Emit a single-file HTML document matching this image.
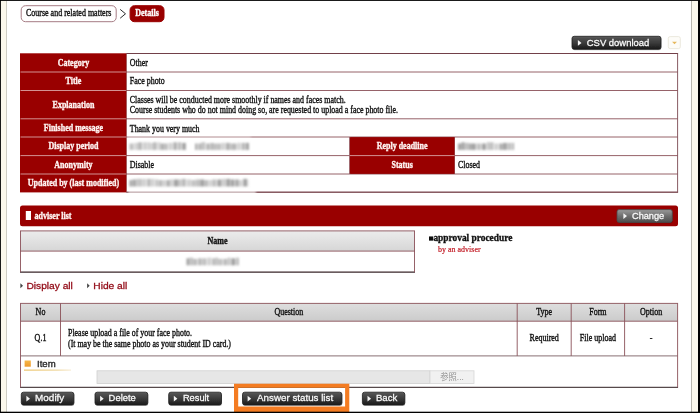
<!DOCTYPE html>
<html lang="en">
<head>
<meta charset="utf-8">
<title>Details</title>
<style>
html,body{margin:0;padding:0;background:#fff;}
body{width:700px;height:413px;overflow:hidden;}
svg{display:block;}
text{white-space:pre;}
</style>
</head>
<body>
<svg width="700" height="413" viewBox="0 0 700 413">
<defs>
<linearGradient id="gd" x1="0" y1="0" x2="0" y2="1"><stop offset="0" stop-color="#646464"/><stop offset="0.12" stop-color="#505050"/><stop offset="0.55" stop-color="#383838"/><stop offset="1" stop-color="#1a1a1a"/></linearGradient>
<linearGradient id="gg" x1="0" y1="0" x2="0" y2="1"><stop offset="0" stop-color="#9a9a9a"/><stop offset="0.5" stop-color="#6e6e6e"/><stop offset="1" stop-color="#4e4e4e"/></linearGradient>
<linearGradient id="gh" x1="0" y1="0" x2="0" y2="1"><stop offset="0" stop-color="#dedede"/><stop offset="1" stop-color="#cbcbcb"/></linearGradient>
<linearGradient id="gh2" x1="0" y1="0" x2="0" y2="1"><stop offset="0" stop-color="#ececec"/><stop offset="1" stop-color="#d6d6d6"/></linearGradient>
<linearGradient id="go" x1="0" y1="0" x2="0" y2="1"><stop offset="0" stop-color="#f7b84a"/><stop offset="1" stop-color="#ee9a2c"/></linearGradient>
<linearGradient id="gu" x1="0" y1="0" x2="1" y2="0"><stop offset="0" stop-color="#e9b84c"/><stop offset="0.7" stop-color="#ecd08c"/><stop offset="1" stop-color="#f6ead0"/></linearGradient>
<filter id="soft" filterUnits="userSpaceOnUse" x="-10" y="-10" width="720" height="433"><feGaussianBlur stdDeviation="0.4"/></filter>
<filter id="bl" x="-10%" y="-100%" width="120%" height="300%"><feGaussianBlur stdDeviation="1.25"/></filter>
</defs>
<g filter="url(#soft)">
<rect x="-10" y="-10" width="720" height="433" fill="#ffffff" />
<rect x="0.5" y="0.5" width="6" height="412" fill="#fbf8ec" />
<line x1="6.5" y1="1" x2="6.5" y2="412" stroke="#cfcdc3" stroke-width="1" />
<rect x="691.5" y="1" width="6.5" height="411" fill="#fbf8ec" />
<line x1="691.5" y1="1" x2="691.5" y2="412" stroke="#b9b7ae" stroke-width="1" />
<rect x="21.2" y="5.7" width="95" height="16" rx="4.3" ry="4.3" fill="#fff" stroke="#a67c84" stroke-width="1"/>
<text transform="translate(68.7 16.1) scale(1 1.2)" font-family="'Liberation Serif','Noto Serif CJK SC',serif" font-size="8" font-weight="normal" fill="#111" text-anchor="middle"  stroke="#111" stroke-width="0.3">Course and related matters</text>
<polyline points="120.2,9.4 125.5,13.8 120.2,18.2" fill="none" stroke="#2a2a2a" stroke-width="1"/>
<rect x="130.1" y="5.7" width="33.9" height="16" rx="4.3" ry="4.3" fill="#990000" stroke="#990000" stroke-width="1"/>
<text transform="translate(147 16.1) scale(1 1.2)" font-family="'Liberation Serif','Noto Serif CJK SC',serif" font-size="8" font-weight="bold" fill="#fff" text-anchor="middle"  stroke="#fff" stroke-width="0.3">Details</text>
<rect x="572.4" y="37.199999999999996" width="89" height="13" rx="2.2" fill="#000" opacity="0.25"/>
<rect x="572" y="36.3" width="89" height="13" rx="2.2" fill="url(#gd)" stroke="#1c1c1c" stroke-width="0.8"/>
<polygon points="577.9,40.0 581.5,42.9 577.9,45.8" fill="#f4f4f4"/>
<text transform="translate(586.8000000000001 45.5) scale(1 1.0)" font-family="'Liberation Sans','Noto Sans CJK JP',sans-serif" font-size="9.35" font-weight="normal" fill="#fafafa" text-anchor="start" textLength="62.5" lengthAdjust="spacingAndGlyphs" stroke="#fafafa" stroke-width="0.27">CSV download</text>
<rect x="668.3" y="36.6" width="12" height="12" rx="1.8" fill="#fdfcf8" stroke="#e9e6da" stroke-width="0.9"/>
<polygon points="672.1,41.7 676.9,41.7 674.5,44.3" fill="#e6b85c"/>
<rect x="20.0" y="53.3" width="106.4" height="139.1" fill="#990000" />
<rect x="349.7" y="137" width="104.80000000000001" height="37" fill="#990000" />
<line x1="20.5" y1="72" x2="126.4" y2="72" stroke="#d9a3a3" stroke-width="0.9" />
<line x1="20.5" y1="90.5" x2="126.4" y2="90.5" stroke="#d9a3a3" stroke-width="0.9" />
<line x1="20.5" y1="118.8" x2="126.4" y2="118.8" stroke="#d9a3a3" stroke-width="0.9" />
<line x1="20.5" y1="137" x2="126.4" y2="137" stroke="#d9a3a3" stroke-width="0.9" />
<line x1="20.5" y1="155.6" x2="126.4" y2="155.6" stroke="#d9a3a3" stroke-width="0.9" />
<line x1="20.5" y1="174" x2="126.4" y2="174" stroke="#d9a3a3" stroke-width="0.9" />
<line x1="349.7" y1="155.6" x2="454.5" y2="155.6" stroke="#d9a3a3" stroke-width="0.9" />
<line x1="126.4" y1="53.5" x2="677.6" y2="53.5" stroke="#8a5058" stroke-width="0.9" />
<line x1="126.4" y1="72" x2="677.6" y2="72" stroke="#8a5058" stroke-width="0.9" />
<line x1="126.4" y1="90.5" x2="677.6" y2="90.5" stroke="#8a5058" stroke-width="0.9" />
<line x1="126.4" y1="118.8" x2="677.6" y2="118.8" stroke="#8a5058" stroke-width="0.9" />
<line x1="126.4" y1="137" x2="677.6" y2="137" stroke="#8a5058" stroke-width="0.9" />
<line x1="126.4" y1="155.6" x2="677.6" y2="155.6" stroke="#8a5058" stroke-width="0.9" />
<line x1="126.4" y1="174" x2="677.6" y2="174" stroke="#8a5058" stroke-width="0.9" />
<line x1="126.4" y1="192.2" x2="677.6" y2="192.2" stroke="#8a5058" stroke-width="0.9" />
<line x1="126.4" y1="53.5" x2="678.0500000000001" y2="53.5" stroke="#6e3c44" stroke-width="0.9" />
<line x1="126.4" y1="192.2" x2="678.0500000000001" y2="192.2" stroke="#6e3c44" stroke-width="0.9" />
<line x1="677.6" y1="53.1" x2="677.6" y2="192.6" stroke="#7a4850" stroke-width="0.9" />
<line x1="126.4" y1="53.5" x2="126.4" y2="192.2" stroke="#7a2a30" stroke-width="0.6" />
<line x1="349.7" y1="137" x2="349.7" y2="174" stroke="#8a5058" stroke-width="0.9" />
<line x1="454.5" y1="137" x2="454.5" y2="174" stroke="#7a2a30" stroke-width="0.6" />
<rect x="350.09999999999997" y="137.4" width="104.20000000000002" height="36.2" fill="#990000" />
<line x1="349.7" y1="155.6" x2="454.5" y2="155.6" stroke="#d9a3a3" stroke-width="0.9" />
<text transform="translate(73.45 65.75) scale(1 1.2)" font-family="'Liberation Serif','Noto Serif CJK SC',serif" font-size="8" font-weight="bold" fill="#fff4f2" text-anchor="middle"  stroke="#fff4f2" stroke-width="0.3">Category</text>
<text transform="translate(73.45 84.25) scale(1 1.2)" font-family="'Liberation Serif','Noto Serif CJK SC',serif" font-size="8" font-weight="bold" fill="#fff4f2" text-anchor="middle"  stroke="#fff4f2" stroke-width="0.3">Title</text>
<text transform="translate(73.45 107.65) scale(1 1.2)" font-family="'Liberation Serif','Noto Serif CJK SC',serif" font-size="8" font-weight="bold" fill="#fff4f2" text-anchor="middle"  stroke="#fff4f2" stroke-width="0.3">Explanation</text>
<text transform="translate(73.45 130.9) scale(1 1.2)" font-family="'Liberation Serif','Noto Serif CJK SC',serif" font-size="8" font-weight="bold" fill="#fff4f2" text-anchor="middle"  stroke="#fff4f2" stroke-width="0.3">Finished message</text>
<text transform="translate(73.45 149.3) scale(1 1.2)" font-family="'Liberation Serif','Noto Serif CJK SC',serif" font-size="8" font-weight="bold" fill="#fff4f2" text-anchor="middle"  stroke="#fff4f2" stroke-width="0.3">Display period</text>
<text transform="translate(73.45 167.8) scale(1 1.2)" font-family="'Liberation Serif','Noto Serif CJK SC',serif" font-size="8" font-weight="bold" fill="#fff4f2" text-anchor="middle"  stroke="#fff4f2" stroke-width="0.3">Anonymity</text>
<text transform="translate(73.45 186.1) scale(1 1.2)" font-family="'Liberation Serif','Noto Serif CJK SC',serif" font-size="8" font-weight="bold" fill="#fff4f2" text-anchor="middle"  stroke="#fff4f2" stroke-width="0.3">Updated by (last modified)</text>
<text transform="translate(402.1 149.3) scale(1 1.2)" font-family="'Liberation Serif','Noto Serif CJK SC',serif" font-size="8" font-weight="bold" fill="#fff4f2" text-anchor="middle"  stroke="#fff4f2" stroke-width="0.3">Reply deadline</text>
<text transform="translate(402.1 167.8) scale(1 1.2)" font-family="'Liberation Serif','Noto Serif CJK SC',serif" font-size="8" font-weight="bold" fill="#fff4f2" text-anchor="middle"  stroke="#fff4f2" stroke-width="0.3">Status</text>
<text transform="translate(129.8 66.35) scale(1 1.2)" font-family="'Liberation Serif','Noto Serif CJK SC',serif" font-size="7.93" font-weight="normal" fill="#111" text-anchor="start"  stroke="#111" stroke-width="0.3">Other</text>
<text transform="translate(129.8 84.45) scale(1 1.2)" font-family="'Liberation Serif','Noto Serif CJK SC',serif" font-size="7.93" font-weight="normal" fill="#111" text-anchor="start"  stroke="#111" stroke-width="0.3">Face photo</text>
<text transform="translate(129.8 102.6) scale(1 1.2)" font-family="'Liberation Serif','Noto Serif CJK SC',serif" font-size="7.93" font-weight="normal" fill="#111" text-anchor="start"  stroke="#111" stroke-width="0.3">Classes will be conducted more smoothly if names and faces match.</text>
<text transform="translate(129.8 112.5) scale(1 1.2)" font-family="'Liberation Serif','Noto Serif CJK SC',serif" font-size="7.93" font-weight="normal" fill="#111" text-anchor="start"  stroke="#111" stroke-width="0.3">Course students who do not mind doing so, are requested to upload a face photo file.</text>
<text transform="translate(129.8 131.8) scale(1 1.2)" font-family="'Liberation Serif','Noto Serif CJK SC',serif" font-size="7.93" font-weight="normal" fill="#111" text-anchor="start"  stroke="#111" stroke-width="0.3">Thank you very much</text>
<text transform="translate(129.8 168.0) scale(1 1.2)" font-family="'Liberation Serif','Noto Serif CJK SC',serif" font-size="7.93" font-weight="normal" fill="#111" text-anchor="start"  stroke="#111" stroke-width="0.3">Disable</text>
<text transform="translate(458 168.0) scale(1 1.2)" font-family="'Liberation Serif','Noto Serif CJK SC',serif" font-size="7.93" font-weight="normal" fill="#111" text-anchor="start"  stroke="#111" stroke-width="0.3">Closed</text>
<rect x="128" y="190.7" width="128" height="3" fill="#ffffff" opacity="0.75" filter="url(#bl)"/>
<rect x="127" y="136" width="124" height="2" fill="#ffffff" opacity="0.45" filter="url(#bl)"/>
<g filter="url(#bl)"><rect x="129.5" y="143.5" width="4.2" height="6.4" fill="#8c8c8c" opacity="0.55"/><rect x="134.6" y="142.9" width="3.2" height="7.0" fill="#8c8c8c" opacity="0.42"/><rect x="138.0" y="142.3" width="4.2" height="7.6" fill="#8c8c8c" opacity="0.6"/><rect x="143.1" y="142.3" width="3.8" height="7.6" fill="#8c8c8c" opacity="0.42"/><rect x="147.4" y="142.3" width="2.6" height="7.6" fill="#8c8c8c" opacity="0.42"/><rect x="150.2" y="142.9" width="2.6" height="7.0" fill="#8c8c8c" opacity="0.42"/><rect x="153.0" y="142.3" width="3.8" height="7.6" fill="#8c8c8c" opacity="0.6"/><rect x="157.7" y="142.3" width="2.6" height="7.6" fill="#8c8c8c" opacity="0.42"/><rect x="160.5" y="143.5" width="3.8" height="6.4" fill="#8c8c8c" opacity="0.68"/><rect x="164.5" y="143.5" width="3.2" height="6.4" fill="#8c8c8c" opacity="0.6"/><rect x="168.6" y="142.9" width="3.8" height="7.0" fill="#8c8c8c" opacity="0.42"/><rect x="173.3" y="142.3" width="3.8" height="7.6" fill="#8c8c8c" opacity="0.68"/><rect x="178.0" y="142.3" width="3.2" height="7.6" fill="#8c8c8c" opacity="0.6"/><rect x="182.1" y="142.9" width="3.8" height="7.0" fill="#8c8c8c" opacity="0.8"/></g>
<g filter="url(#bl)"><rect x="195.0" y="143.5" width="2.6" height="6.4" fill="#8c8c8c" opacity="0.68"/><rect x="198.5" y="143.5" width="2.6" height="6.4" fill="#8c8c8c" opacity="0.68"/><rect x="201.3" y="142.3" width="3.8" height="7.6" fill="#8c8c8c" opacity="0.55"/><rect x="206.0" y="143.5" width="4.2" height="6.4" fill="#8c8c8c" opacity="0.6"/><rect x="210.7" y="142.9" width="2.6" height="7.0" fill="#8c8c8c" opacity="0.68"/><rect x="213.5" y="143.5" width="3.2" height="6.4" fill="#8c8c8c" opacity="0.6"/><rect x="216.9" y="143.5" width="4.2" height="6.4" fill="#8c8c8c" opacity="0.55"/><rect x="221.6" y="142.9" width="3.2" height="7.0" fill="#8c8c8c" opacity="0.42"/><rect x="225.7" y="142.9" width="4.2" height="7.0" fill="#8c8c8c" opacity="0.68"/><rect x="230.4" y="143.5" width="2.6" height="6.4" fill="#8c8c8c" opacity="0.6"/><rect x="233.2" y="143.5" width="3.2" height="6.4" fill="#8c8c8c" opacity="0.68"/><rect x="237.3" y="142.9" width="3.2" height="7.0" fill="#8c8c8c" opacity="0.42"/><rect x="241.4" y="142.9" width="4.2" height="7.0" fill="#8c8c8c" opacity="0.6"/><rect x="246.1" y="142.9" width="2.9" height="7.0" fill="#8c8c8c" opacity="0.8"/></g>
<g filter="url(#bl)"><rect x="458.0" y="143.5" width="3.2" height="6.4" fill="#8c8c8c" opacity="0.8"/><rect x="461.4" y="142.3" width="3.2" height="7.6" fill="#8c8c8c" opacity="0.8"/><rect x="464.8" y="142.9" width="4.2" height="7.0" fill="#8c8c8c" opacity="0.55"/><rect x="469.2" y="143.5" width="2.6" height="6.4" fill="#8c8c8c" opacity="0.8"/><rect x="472.0" y="143.5" width="3.8" height="6.4" fill="#8c8c8c" opacity="0.8"/><rect x="476.7" y="143.5" width="4.2" height="6.4" fill="#8c8c8c" opacity="0.55"/><rect x="481.8" y="143.5" width="4.2" height="6.4" fill="#8c8c8c" opacity="0.8"/><rect x="486.9" y="142.3" width="2.6" height="7.6" fill="#8c8c8c" opacity="0.55"/><rect x="489.7" y="142.3" width="3.8" height="7.6" fill="#8c8c8c" opacity="0.55"/><rect x="494.4" y="143.5" width="3.8" height="6.4" fill="#8c8c8c" opacity="0.42"/><rect x="499.1" y="143.5" width="3.8" height="6.4" fill="#8c8c8c" opacity="0.68"/><rect x="503.1" y="142.9" width="3.8" height="7.0" fill="#8c8c8c" opacity="0.8"/><rect x="507.4" y="142.9" width="4.2" height="7.0" fill="#8c8c8c" opacity="0.55"/><rect x="512.5" y="142.9" width="1.5" height="7.0" fill="#8c8c8c" opacity="0.8"/></g>
<g filter="url(#bl)"><rect x="129.5" y="180.1" width="2.6" height="6.4" fill="#8c8c8c" opacity="0.8"/><rect x="132.6" y="179.5" width="3.2" height="7.0" fill="#8c8c8c" opacity="0.8"/><rect x="136.3" y="178.9" width="3.2" height="7.6" fill="#8c8c8c" opacity="0.55"/><rect x="139.7" y="178.9" width="2.6" height="7.6" fill="#8c8c8c" opacity="0.55"/><rect x="142.8" y="178.9" width="3.2" height="7.6" fill="#8c8c8c" opacity="0.42"/><rect x="146.9" y="178.9" width="3.8" height="7.6" fill="#8c8c8c" opacity="0.6"/><rect x="151.2" y="178.9" width="3.2" height="7.6" fill="#8c8c8c" opacity="0.42"/><rect x="155.3" y="179.5" width="2.6" height="7.0" fill="#8c8c8c" opacity="0.55"/><rect x="158.4" y="180.1" width="4.2" height="6.4" fill="#8c8c8c" opacity="0.6"/><rect x="163.1" y="180.1" width="3.2" height="6.4" fill="#8c8c8c" opacity="0.42"/><rect x="166.8" y="180.1" width="2.6" height="6.4" fill="#8c8c8c" opacity="0.8"/><rect x="169.6" y="179.5" width="3.8" height="7.0" fill="#8c8c8c" opacity="0.42"/><rect x="173.9" y="179.5" width="4.2" height="7.0" fill="#8c8c8c" opacity="0.8"/><rect x="178.3" y="179.5" width="3.2" height="7.0" fill="#8c8c8c" opacity="0.55"/><rect x="182.0" y="178.9" width="3.8" height="7.6" fill="#8c8c8c" opacity="0.6"/><rect x="186.7" y="179.5" width="4.2" height="7.0" fill="#8c8c8c" opacity="0.42"/><rect x="191.4" y="180.1" width="4.2" height="6.4" fill="#8c8c8c" opacity="0.55"/><rect x="195.8" y="179.5" width="4.2" height="7.0" fill="#8c8c8c" opacity="0.55"/><rect x="200.2" y="179.5" width="3.8" height="7.0" fill="#8c8c8c" opacity="0.8"/><rect x="204.2" y="180.1" width="3.8" height="6.4" fill="#8c8c8c" opacity="0.6"/><rect x="208.5" y="180.1" width="3.2" height="6.4" fill="#8c8c8c" opacity="0.42"/><rect x="212.2" y="179.5" width="4.2" height="7.0" fill="#8c8c8c" opacity="0.55"/><rect x="217.3" y="179.5" width="4.2" height="7.0" fill="#8c8c8c" opacity="0.8"/><rect x="222.0" y="178.9" width="4.2" height="7.6" fill="#8c8c8c" opacity="0.42"/><rect x="226.4" y="178.9" width="3.8" height="7.6" fill="#8c8c8c" opacity="0.8"/><rect x="230.7" y="179.5" width="3.8" height="7.0" fill="#8c8c8c" opacity="0.8"/><rect x="235.4" y="179.5" width="3.2" height="7.0" fill="#8c8c8c" opacity="0.8"/><rect x="239.1" y="180.1" width="3.2" height="6.4" fill="#8c8c8c" opacity="0.42"/><rect x="243.2" y="178.9" width="3.8" height="7.6" fill="#8c8c8c" opacity="0.8"/><rect x="247.5" y="179.5" width="1.0" height="7.0" fill="#8c8c8c" opacity="0.42"/></g>
<rect x="20" y="205.4" width="658" height="20.9" rx="2.5" fill="#990000"/>
<rect x="25.8" y="211" width="5.2" height="9" fill="#ffffff" />
<text transform="translate(34.6 218.6) scale(1 1.2)" font-family="'Liberation Serif','Noto Serif CJK SC',serif" font-size="8" font-weight="bold" fill="#fff4f2" text-anchor="start"  stroke="#fff4f2" stroke-width="0.3">adviser list</text>
<rect x="617.4" y="210.5" width="55.3" height="12.8" rx="2.2" fill="#000" opacity="0.25"/>
<rect x="617" y="209.6" width="55.3" height="12.8" rx="2.2" fill="url(#gg)" stroke="#4a4a4a" stroke-width="0.8"/>
<polygon points="623.4,213.2 627.0,216.1 623.4,219.0" fill="#f4f4f4"/>
<text transform="translate(632.0 219.2) scale(1 1.0)" font-family="'Liberation Sans','Noto Sans CJK JP',sans-serif" font-size="9.1" font-weight="normal" fill="#fafafa" text-anchor="start" textLength="32.2" lengthAdjust="spacingAndGlyphs" stroke="#fafafa" stroke-width="0.27">Change</text>
<rect x="20.5" y="230.9" width="394.0" height="20.19999999999999" fill="url(#gh2)" />
<line x1="20.05" y1="230.9" x2="414.95" y2="230.9" stroke="#8a5058" stroke-width="0.9" />
<line x1="20.05" y1="251.1" x2="414.95" y2="251.1" stroke="#8a5058" stroke-width="0.9" />
<line x1="20.05" y1="272.1" x2="414.95" y2="272.1" stroke="#3a2428" stroke-width="1.05" />
<line x1="20.5" y1="230.9" x2="20.5" y2="272.1" stroke="#8a5058" stroke-width="0.9" />
<line x1="414.5" y1="230.9" x2="414.5" y2="272.1" stroke="#8a5058" stroke-width="0.9" />
<text transform="translate(217.5 243.5) scale(1 1.2)" font-family="'Liberation Serif','Noto Serif CJK SC',serif" font-size="8" font-weight="bold" fill="#111" text-anchor="middle"  stroke="#111" stroke-width="0.3">Name</text>
<g filter="url(#bl)"><rect x="186.5" y="258.3" width="2.6" height="7.0" fill="#8c8c8c" opacity="0.8"/><rect x="189.3" y="257.7" width="3.8" height="7.6" fill="#8c8c8c" opacity="0.55"/><rect x="193.3" y="258.9" width="3.8" height="6.4" fill="#8c8c8c" opacity="0.6"/><rect x="198.0" y="258.3" width="3.8" height="7.0" fill="#8c8c8c" opacity="0.6"/><rect x="202.3" y="258.3" width="4.2" height="7.0" fill="#8c8c8c" opacity="0.55"/><rect x="207.4" y="257.7" width="3.8" height="7.6" fill="#8c8c8c" opacity="0.42"/><rect x="212.1" y="258.3" width="3.2" height="7.0" fill="#8c8c8c" opacity="0.6"/><rect x="215.5" y="257.7" width="2.6" height="7.6" fill="#8c8c8c" opacity="0.55"/><rect x="218.3" y="258.9" width="4.2" height="6.4" fill="#8c8c8c" opacity="0.55"/><rect x="223.4" y="258.9" width="3.8" height="6.4" fill="#8c8c8c" opacity="0.6"/><rect x="227.7" y="257.7" width="2.6" height="7.6" fill="#8c8c8c" opacity="0.55"/><rect x="231.2" y="258.3" width="4.2" height="7.0" fill="#8c8c8c" opacity="0.8"/><rect x="236.3" y="257.7" width="2.6" height="7.6" fill="#8c8c8c" opacity="0.6"/></g>
<text transform="translate(428.5 240.0) scale(1 1.0)" font-family="'DejaVu Sans','Noto Sans CJK JP',sans-serif" font-size="5.6" font-weight="normal" fill="#111" text-anchor="start" >■</text>
<text transform="translate(433.4 240.8) scale(1 1.08)" font-family="'Liberation Serif','Noto Serif CJK SC',serif" font-size="9.4" font-weight="bold" fill="#111" text-anchor="start"  stroke="#111" stroke-width="0.3">approval procedure</text>
<text transform="translate(438 251.8) scale(1 1.12)" font-family="'Liberation Serif','Noto Serif CJK SC',serif" font-size="8" font-weight="normal" fill="#c4202a" text-anchor="start"  stroke="#c4202a" stroke-width="0.2">by an adviser</text>
<polygon points="20.4,283.2 23,285.7 20.4,288.2" fill="#444"/>
<text transform="translate(26.4 288.8) scale(1 0.92)" font-family="'Liberation Sans','Noto Sans CJK JP',sans-serif" font-size="10.2" font-weight="normal" fill="#920a16" text-anchor="start"  stroke="#920a16" stroke-width="0.3">Display all</text>
<polygon points="87.1,283.2 89.7,285.7 87.1,288.2" fill="#444"/>
<text transform="translate(93.3 288.8) scale(1 0.92)" font-family="'Liberation Sans','Noto Sans CJK JP',sans-serif" font-size="10.2" font-weight="normal" fill="#920a16" text-anchor="start"  stroke="#920a16" stroke-width="0.3">Hide all</text>
<rect x="20.5" y="303.4" width="657.1" height="17.80000000000001" fill="url(#gh)" />
<line x1="20.05" y1="303.4" x2="678.0500000000001" y2="303.4" stroke="#8a5058" stroke-width="0.9" />
<line x1="20.5" y1="321.2" x2="677.6" y2="321.2" stroke="#8a5058" stroke-width="0.9" />
<line x1="20.5" y1="355.9" x2="677.6" y2="355.9" stroke="#7a6064" stroke-width="0.9" />
<line x1="20.05" y1="387.3" x2="678.0500000000001" y2="387.3" stroke="#2e1c1e" stroke-width="1" />
<line x1="20.5" y1="303.4" x2="20.5" y2="387.3" stroke="#8a5058" stroke-width="0.9" />
<line x1="677.6" y1="303.4" x2="677.6" y2="387.3" stroke="#8a5058" stroke-width="0.9" />
<line x1="60.5" y1="303.4" x2="60.5" y2="355.9" stroke="#8a5058" stroke-width="0.9" />
<line x1="517.2" y1="303.4" x2="517.2" y2="355.9" stroke="#8a5058" stroke-width="0.9" />
<line x1="571.2" y1="303.4" x2="571.2" y2="355.9" stroke="#8a5058" stroke-width="0.9" />
<line x1="624.6" y1="303.4" x2="624.6" y2="355.9" stroke="#8a5058" stroke-width="0.9" />
<text transform="translate(40.5 314.69999999999993) scale(1 1.2)" font-family="'Liberation Serif','Noto Serif CJK SC',serif" font-size="8" font-weight="normal" fill="#111" text-anchor="middle"  stroke="#111" stroke-width="0.3">No</text>
<text transform="translate(288.85 314.69999999999993) scale(1 1.2)" font-family="'Liberation Serif','Noto Serif CJK SC',serif" font-size="8" font-weight="normal" fill="#111" text-anchor="middle"  stroke="#111" stroke-width="0.3">Question</text>
<text transform="translate(544.2 314.69999999999993) scale(1 1.2)" font-family="'Liberation Serif','Noto Serif CJK SC',serif" font-size="8" font-weight="normal" fill="#111" text-anchor="middle"  stroke="#111" stroke-width="0.3">Type</text>
<text transform="translate(597.9000000000001 314.69999999999993) scale(1 1.2)" font-family="'Liberation Serif','Noto Serif CJK SC',serif" font-size="8" font-weight="normal" fill="#111" text-anchor="middle"  stroke="#111" stroke-width="0.3">Form</text>
<text transform="translate(651.1 314.69999999999993) scale(1 1.2)" font-family="'Liberation Serif','Noto Serif CJK SC',serif" font-size="8" font-weight="normal" fill="#111" text-anchor="middle"  stroke="#111" stroke-width="0.3">Option</text>
<text transform="translate(40.5 341.24999999999994) scale(1 1.2)" font-family="'Liberation Serif','Noto Serif CJK SC',serif" font-size="8" font-weight="normal" fill="#111" text-anchor="middle"  stroke="#111" stroke-width="0.3">Q.1</text>
<text transform="translate(68 335.6) scale(1 1.2)" font-family="'Liberation Serif','Noto Serif CJK SC',serif" font-size="7.93" font-weight="normal" fill="#111" text-anchor="start"  stroke="#111" stroke-width="0.3">Please upload a file of your face photo.</text>
<text transform="translate(68 346.7) scale(1 1.2)" font-family="'Liberation Serif','Noto Serif CJK SC',serif" font-size="7.93" font-weight="normal" fill="#111" text-anchor="start"  stroke="#111" stroke-width="0.3">(It may be the same photo as your student ID card.)</text>
<text transform="translate(544.2 341.24999999999994) scale(1 1.2)" font-family="'Liberation Serif','Noto Serif CJK SC',serif" font-size="8" font-weight="normal" fill="#111" text-anchor="middle"  stroke="#111" stroke-width="0.3">Required</text>
<text transform="translate(597.9000000000001 341.24999999999994) scale(1 1.2)" font-family="'Liberation Serif','Noto Serif CJK SC',serif" font-size="8" font-weight="normal" fill="#111" text-anchor="middle"  stroke="#111" stroke-width="0.3">File upload</text>
<text transform="translate(651.1 341.24999999999994) scale(1 1.2)" font-family="'Liberation Serif','Noto Serif CJK SC',serif" font-size="8" font-weight="normal" fill="#111" text-anchor="middle"  stroke="#111" stroke-width="0.3">-</text>
<rect x="24.6" y="360.5" width="6.2" height="6.2" fill="url(#go)" />
<text transform="translate(37 367.4) scale(1 0.94)" font-family="'Liberation Sans','Noto Sans CJK JP',sans-serif" font-size="9.6" font-weight="normal" fill="#222" text-anchor="start"  stroke="#222" stroke-width="0.3">Item</text>
<rect x="24" y="369.6" width="47" height="1" fill="url(#gu)" />
<rect x="97" y="370.8" width="333" height="12.8" fill="#e6e6e6" stroke="#cfcfcf" stroke-width="0.8"/>
<rect x="430" y="370.8" width="44" height="12.8" fill="#f1f1f1" stroke="#d6d6d6" stroke-width="0.8"/>
<text transform="translate(452 380.3) scale(1 1.05)" font-family="'Liberation Sans','Noto Sans CJK JP',sans-serif" font-size="8.3" font-weight="normal" fill="#929292" text-anchor="middle" >参照...</text>
<rect x="21.7" y="393.09999999999997" width="52.6" height="12.8" rx="2.2" fill="#000" opacity="0.25"/>
<rect x="21.3" y="392.2" width="52.6" height="12.8" rx="2.2" fill="url(#gd)" stroke="#1c1c1c" stroke-width="0.8"/>
<polygon points="26.400000000000002,395.8 30.0,398.7 26.400000000000002,401.59999999999997" fill="#f4f4f4"/>
<text transform="translate(35.1 401.29999999999995) scale(1 1.0)" font-family="'Liberation Sans','Noto Sans CJK JP',sans-serif" font-size="9.35" font-weight="normal" fill="#fafafa" text-anchor="start" textLength="29.2" lengthAdjust="spacingAndGlyphs" stroke="#fafafa" stroke-width="0.27">Modify</text>
<rect x="95.4" y="393.09999999999997" width="52.8" height="12.8" rx="2.2" fill="#000" opacity="0.25"/>
<rect x="95.0" y="392.2" width="52.8" height="12.8" rx="2.2" fill="url(#gd)" stroke="#1c1c1c" stroke-width="0.8"/>
<polygon points="100.10000000000001,395.8 103.7,398.7 100.10000000000001,401.59999999999997" fill="#f4f4f4"/>
<text transform="translate(108.60000000000001 401.29999999999995) scale(1 1.0)" font-family="'Liberation Sans','Noto Sans CJK JP',sans-serif" font-size="9.35" font-weight="normal" fill="#fafafa" text-anchor="start" textLength="27.2" lengthAdjust="spacingAndGlyphs" stroke="#fafafa" stroke-width="0.27">Delete</text>
<rect x="169.1" y="393.09999999999997" width="52.8" height="12.8" rx="2.2" fill="#000" opacity="0.25"/>
<rect x="168.7" y="392.2" width="52.8" height="12.8" rx="2.2" fill="url(#gd)" stroke="#1c1c1c" stroke-width="0.8"/>
<polygon points="173.79999999999998,395.8 177.39999999999998,398.7 173.79999999999998,401.59999999999997" fill="#f4f4f4"/>
<text transform="translate(182.89999999999998 401.29999999999995) scale(1 1.0)" font-family="'Liberation Sans','Noto Sans CJK JP',sans-serif" font-size="9.35" font-weight="normal" fill="#fafafa" text-anchor="start" textLength="26.3" lengthAdjust="spacingAndGlyphs" stroke="#fafafa" stroke-width="0.27">Result</text>
<rect x="242.9" y="393.09999999999997" width="99.4" height="12.8" rx="2.2" fill="#000" opacity="0.25"/>
<rect x="242.5" y="392.2" width="99.4" height="12.8" rx="2.2" fill="url(#gd)" stroke="#1c1c1c" stroke-width="0.8"/>
<polygon points="247.6,395.8 251.2,398.7 247.6,401.59999999999997" fill="#f4f4f4"/>
<text transform="translate(257.09999999999997 401.29999999999995) scale(1 1.0)" font-family="'Liberation Sans','Noto Sans CJK JP',sans-serif" font-size="9.35" font-weight="normal" fill="#fafafa" text-anchor="start" textLength="76.0" lengthAdjust="spacingAndGlyphs" stroke="#fafafa" stroke-width="0.27">Answer status list</text>
<rect x="362.79999999999995" y="393.09999999999997" width="42.4" height="12.8" rx="2.2" fill="#000" opacity="0.25"/>
<rect x="362.4" y="392.2" width="42.4" height="12.8" rx="2.2" fill="url(#gd)" stroke="#1c1c1c" stroke-width="0.8"/>
<polygon points="367.49999999999994,395.8 371.09999999999997,398.7 367.49999999999994,401.59999999999997" fill="#f4f4f4"/>
<text transform="translate(375.9 401.29999999999995) scale(1 1.0)" font-family="'Liberation Sans','Noto Sans CJK JP',sans-serif" font-size="9.35" font-weight="normal" fill="#fafafa" text-anchor="start" textLength="21.4" lengthAdjust="spacingAndGlyphs" stroke="#fafafa" stroke-width="0.27">Back</text>
<path fill-rule="evenodd" fill="#f47c20" d="M234,383.8H349.3V412H234Z M238.2,387.8H345.1V406.6H238.2Z"/>
</g>
<rect x="0" y="0" width="700" height="0.9" fill="#000" />
<rect x="0" y="0" width="0.9" height="413" fill="#000" />
<rect x="698" y="0" width="2" height="413" fill="#000" />
<rect x="0" y="411.7" width="700" height="1.3" fill="#000" />
</svg>
</body>
</html>
